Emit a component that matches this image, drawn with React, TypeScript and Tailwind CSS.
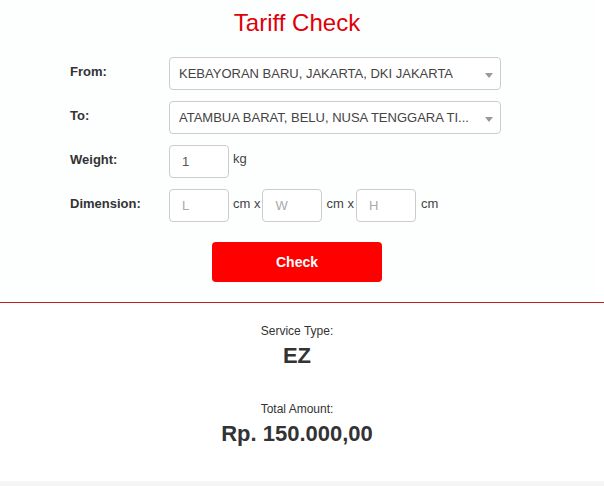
const font = { fontFamily: '"Liberation Sans", Arial, sans-serif' };

const Select = ({ value }: { value: string }) => (
  <div className="relative flex h-[33px] w-[332px] items-center rounded border border-[#ccc] bg-white pl-[9px] pr-7 text-[13px] text-[#444]">
    <span className="truncate">{value}</span>
    <span className="absolute right-[7px] top-[15px] h-0 w-0 border-x-[4px] border-t-[5px] border-x-transparent border-t-[#999]" />
  </div>
);

const Box = ({ value, placeholder }: { value?: string; placeholder?: string }) => (
  <div className="flex h-[33px] w-[60px] items-center rounded border border-[#ccc] bg-white pl-3 text-[13px]">
    {value ? (
      <span className="text-[#555]">{value}</span>
    ) : (
      <span className="text-[#aaa]">{placeholder}</span>
    )}
  </div>
);

const Row = ({ label, children }: { label: string; children: React.ReactNode }) => (
  <div className="flex items-center">
    <div className="w-[99px] pb-[3px] text-[13px] font-bold text-[#333]">{label}</div>
    {children}
  </div>
);

export default function App() {
  return (
    <div className="h-[486px] w-[604px] bg-white" style={font}>
      <div className="w-[594px] bg-[#fdfefe]">
        <h1 className="pt-[9px] text-center text-[24px] leading-7 text-[#e0000a]">Tariff Check</h1>

        <div className="ml-[70px] mt-[20px] flex flex-col gap-[11px]">
          <Row label="From:">
            <Select value="KEBAYORAN BARU, JAKARTA, DKI JAKARTA" />
          </Row>
          <Row label="To:">
            <Select value="ATAMBUA BARAT, BELU, NUSA TENGGARA TI..." />
          </Row>
          <Row label="Weight:">
            <Box value="1" />
            <span className="mb-[5px] ml-1 text-[13px] text-[#444]">kg</span>
          </Row>
          <Row label="Dimension:">
            <Box placeholder="L" />
            <span className="mb-[3px] ml-1 mr-[2px] text-[13px] text-[#444]">cm x</span>
            <Box placeholder="W" />
            <span className="mb-[3px] ml-1 mr-[2px] text-[13px] text-[#444]">cm x</span>
            <Box placeholder="H" />
            <span className="mb-[3px] ml-[5px] text-[13px] text-[#444]">cm</span>
          </Row>
        </div>

        <div className="flex justify-center pb-[20px] pt-[20px]">
          <button className="h-[40px] w-[170px] rounded bg-[#ff0000] text-[14px] font-bold text-white">
            Check
          </button>
        </div>
      </div>

      <div className="h-px w-full bg-[#b82020]" />

      <div className="flex w-[594px] flex-col items-center pt-[20px] text-[#333]">
        <div className="text-[12px] leading-4">Service Type:</div>
        <div className="mt-[3px] text-[22px] font-bold leading-7">EZ</div>
        <div className="mt-[31px] text-[12px] leading-4">Total Amount:</div>
        <div className="mt-[3px] text-[22px] font-bold leading-7">Rp. 150.000,00</div>
      </div>

      <div className="mt-[33px] h-[8px] w-full bg-[#f5f5f5]" />
    </div>
  );
}
